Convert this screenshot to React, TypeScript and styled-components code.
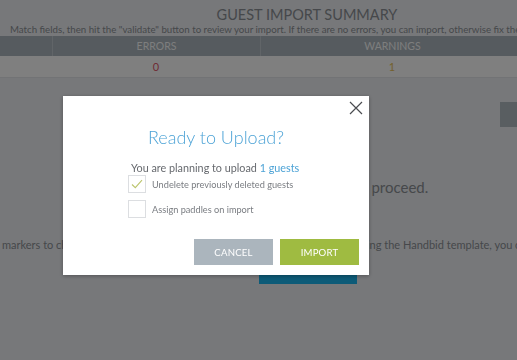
import React, { useState } from 'react';
import styled, { createGlobalStyle } from 'styled-components';

const GlobalStyle = createGlobalStyle`
  html, body {
    margin: 0;
    padding: 0;
    width: 517px;
    height: 360px;
    overflow: hidden;
    background: #eef0f4;
    font-family: Lato, 'Open Sans', sans-serif;
  }
`;

const palette = {
  blue: '#4da3d6',
  green: '#9fbb41',
  slate: '#abb5bd',
  text: '#66696e',
};

const Page = styled.div`
  width: 614px;
  padding-top: 7px;
  color: #8f9399;
`;

const Title = styled.h1`
  margin: 0;
  text-align: center;
  font-size: 14.5px;
  font-weight: 400;
  line-height: 16px;
  color: #8c9096;
`;

const Subtitle = styled.p`
  margin: 0;
  font-size: 9.7px;
  line-height: 13px;
  white-space: nowrap;
  padding-left: 10px;
  color: #8c9096;
`;

const Row = styled.div<{ $head?: boolean }>`
  display: grid;
  grid-template-columns: 52px 208px 264px 90px;
  height: ${(p) => (p.$head ? '20px' : '21px')};
  background: ${(p) => (p.$head ? '#acb6be' : '#ffffff')};
  border-bottom: ${(p) => (p.$head ? 'none' : '1px solid #e4e6ea')};
`;

const Cell = styled.div<{ $head?: boolean; $color?: string }>`
  display: flex;
  align-items: center;
  justify-content: center;
  font-size: ${(p) => (p.$head ? '10.5px' : '11px')};
  color: ${(p) => p.$color || '#fbfcfd'};
  border-left: ${(p) => (p.$head ? '1px solid #c3cad0' : 'none')};
  &:first-child {
    border-left: none;
  }
`;

const Toolbar = styled.div`
  display: flex;
  justify-content: flex-end;
  padding: 24px 0 0;
`;

const GreyButton = styled.div`
  width: 114px;
  height: 25px;
  background: #b3bcc3;
`;

const Notice = styled.p`
  margin: 50px 0 0;
  text-align: center;
  font-size: 15px;
  line-height: 20px;
  color: #8c9096;
`;

const Help = styled.p`
  margin: 41px 0 0 2px;
  font-size: 11px;
  white-space: nowrap;
  line-height: 14px;
  color: #8c9096;
`;

const ActionRow = styled.div`
  display: flex;
  padding: 2px 0 0 259px;
`;

const BlueButton = styled.div`
  width: 98px;
  height: 30px;
  background: #1ab6f0;
`;

const Overlay = styled.div`
  position: fixed;
  inset: 0;
  background: rgba(0, 0, 0, 0.5);
`;

const Modal = styled.div`
  position: fixed;
  left: 63px;
  top: 96px;
  width: 306px;
  height: 179px;
  box-sizing: border-box;
  background: #ffffff;
  box-shadow: 0 1px 4px rgba(0, 0, 0, 0.3);
  padding: 30px 10px 10px;
  display: flex;
  flex-direction: column;
`;

const CloseButton = styled.button`
  position: absolute;
  top: 5px;
  right: 6px;
  width: 14px;
  height: 14px;
  padding: 0;
  border: none;
  background: none;
  cursor: pointer;
  svg {
    display: block;
  }
`;

const ModalTitle = styled.h2`
  margin: 0;
  text-align: center;
  font-size: 18px;
  font-weight: 300;
  line-height: 22px;
  color: ${palette.blue};
`;

const Body = styled.div`
  padding: 13px 0 0 55px;
  display: flex;
  flex-direction: column;
  gap: 7px;
`;

const Summary = styled.p`
  margin: 0 0 -7px 3px;
  font-size: 10.8px;
  line-height: 14px;
  color: ${palette.text};
  span {
    color: ${palette.blue};
  }
`;

const CheckRow = styled.label`
  display: flex;
  align-items: center;
  gap: 6px;
  font-size: 9.2px;
  color: #7a7d82;
  cursor: pointer;
`;

const Box = styled.span`
  width: 18px;
  height: 18px;
  box-sizing: border-box;
  border: 1px solid #dcdee1;
  display: flex;
  align-items: center;
  justify-content: center;
`;

const Footer = styled.div`
  margin-top: auto;
  display: flex;
  justify-content: flex-end;
  gap: 7px;
`;

const Button = styled.button<{ $color: string }>`
  width: 79px;
  height: 26px;
  border: none;
  background: ${(p) => p.$color};
  color: #ffffff;
  font-family: Lato, sans-serif;
  font-size: 9.6px;
  letter-spacing: 0.2px;
  cursor: pointer;
`;

interface ICheckProps {
  label: string;
  checked: boolean;
  onToggle: () => void;
}
const Check: React.FC<ICheckProps> = ({ label, checked, onToggle }) => (
  <CheckRow onClick={onToggle}>
    <Box>
      {checked && (
        <svg width="12" height="10" viewBox="0 0 12 10">
          <path d="M1 5.5 L4.3 8.6 L11 1.2" fill="none" stroke="#bcc56d" strokeWidth="1.1" />
        </svg>
      )}
    </Box>
    {label}
  </CheckRow>
);

const App: React.FC = () => {
  const [undelete, setUndelete] = useState(true);
  const [paddles, setPaddles] = useState(false);
  return (
    <>
      <GlobalStyle />
      <Page>
        <Title>GUEST IMPORT SUMMARY</Title>
        <Subtitle>
          Match fields, then hit the "validate" button to review your import. If there are no errors, you can import,
          otherwise fix the errors and validate again.
        </Subtitle>
        <div>
          <Row $head>
            <Cell $head />
            <Cell $head>ERRORS</Cell>
            <Cell $head>WARNINGS</Cell>
            <Cell $head />
          </Row>
          <Row>
            <Cell />
            <Cell $color="#e0566a">0</Cell>
            <Cell $color="#e8c25a">1</Cell>
            <Cell />
          </Row>
        </div>
        <Toolbar>
          <GreyButton />
        </Toolbar>
        <Notice>You have no errors and may proceed.</Notice>
        <Help>
          markers to choose the matching field for each data column. If you are not using the Handbid template, you can
          skip this step.
        </Help>
        <ActionRow>
          <BlueButton />
        </ActionRow>
      </Page>
      <Overlay />
      <Modal>
        <CloseButton aria-label="close">
          <svg width="14" height="14" viewBox="0 0 14 14">
            <path d="M1 1 L13 13 M13 1 L1 13" stroke="#4a4c50" strokeWidth="1.2" fill="none" />
          </svg>
        </CloseButton>
        <ModalTitle>Ready to Upload?</ModalTitle>
        <Body>
          <Summary>
            You are planning to upload <span>1 guests</span>
          </Summary>
          <Check label="Undelete previously deleted guests" checked={undelete} onToggle={() => setUndelete(!undelete)} />
          <Check label="Assign paddles on import" checked={paddles} onToggle={() => setPaddles(!paddles)} />
        </Body>
        <Footer>
          <Button $color={palette.slate}>CANCEL</Button>
          <Button $color={palette.green}>IMPORT</Button>
        </Footer>
      </Modal>
    </>
  );
};

export default App;
